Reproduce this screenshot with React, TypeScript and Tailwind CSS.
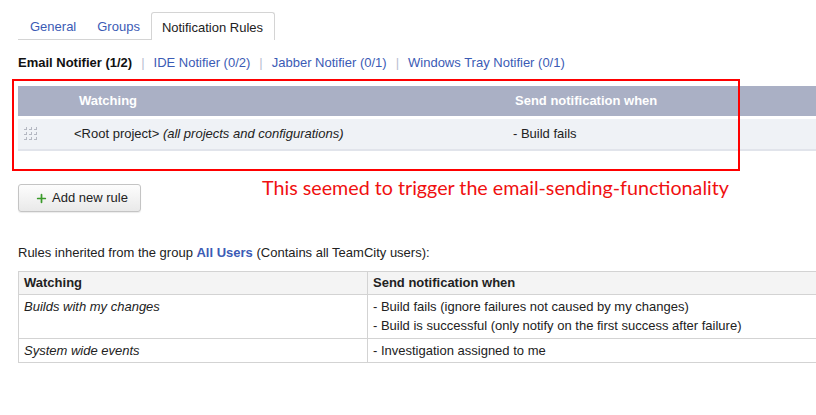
import { Plus } from "lucide-react";

const notifiers = [
  { label: "IDE Notifier (0/2)" },
  { label: "Jabber Notifier (0/1)" },
  { label: "Windows Tray Notifier (0/1)" },
];

const DragHandle = () => (
  <svg width="16" height="15" viewBox="0 0 16 15" className="text-[#b4b8c2]">
    {[0, 5, 10].map((y) =>
      [0, 5, 10].map((x) => (
        <g key={`${x}-${y}`} fill="currentColor">
          <rect x={x + 1} y={y + 2} width="3" height="1" />
          <rect x={x + 3} y={y} width="1" height="3" />
        </g>
      ))
    )}
  </svg>
);

const App = () => {
  return (
    <div className="relative w-[816px] h-[415px] overflow-hidden bg-white text-[13px] text-[#222] font-['Liberation_Sans',Arial,sans-serif]">
      <div className="pl-[18px]">
        {/* Tabs */}
        <div className="pt-[12px]">
          <div className="flex items-stretch w-[256px] border-b border-[#d4d4d4] h-[28px]">
            <span className="flex items-center pl-[12px] pr-[10px] pt-[3px] text-[#3b5bb5]">General</span>
            <span className="flex items-center pl-[11px] pr-[11px] pt-[3px] text-[#3b5bb5]">Groups</span>
            <span className="-mb-px flex items-center pl-[10px] pr-[11px] pt-[3px] border border-b-0 border-[#d4d4d4] rounded-t-[3px] bg-white text-[#222] whitespace-nowrap">
              Notification Rules
            </span>
          </div>
        </div>

        {/* Notifier switch */}
        <div className="mt-[15px] flex items-center leading-[16px] whitespace-nowrap">
          <span className="font-bold text-[#111]">Email Notifier (1/2)</span>
          {notifiers.map((n) => (
            <span key={n.label} className="flex items-center">
              <span className="mx-[9px] text-[#b9bed0]">|</span>
              <span className="text-[#3b5bb5]">{n.label}</span>
            </span>
          ))}
        </div>

        {/* Own rules */}
        <div className="mt-[15px] w-[810px]">
          <div className="flex h-[30px] items-center bg-[#aab0c5] text-white font-bold">
            <span className="w-[56px]" />
            <span className="w-[441px] pl-[5px]">Watching</span>
            <span>Send notification when</span>
          </div>
          <div className="mt-[3px] flex h-[32px] items-center bg-[#eff2f6] border-b-2 border-[#e1e4eb]">
            <span className="w-[56px] pl-[5px] flex items-center">
              <DragHandle />
            </span>
            <span className="w-[439px]">
              &lt;Root project&gt; <i>(all projects and configurations)</i>
            </span>
            <span>- Build fails</span>
          </div>
        </div>

        {/* Add button */}
        <button className="mt-[33px] flex h-[28px] w-[123px] items-center gap-[4px] rounded-[3px] border border-[#c4c4c4] bg-gradient-to-b from-[#fdfdfd] to-[#e9e9e9] pl-[16px] text-[#222] shadow-[0_1px_1px_rgba(0,0,0,0.08)]">
          <Plus className="h-[13px] w-[13px] text-[#3a9a2a]" strokeWidth={3.2} />
          <span>Add new rule</span>
        </button>

        {/* Inherited rules */}
        <p className="mt-[33px] leading-[16px]">
          Rules inherited from the group <span className="font-bold text-[#3b5bb5]">All Users</span> (Contains all TeamCity users):
        </p>

        <div className="mt-[10px] w-[810px] border border-[#d3d3d3]">
          <div className="flex h-[23px] items-center bg-[#f4f4f4] border-b border-[#d3d3d3] font-bold">
            <span className="w-[349px] h-full flex items-center pl-[5px] border-r border-[#d3d3d3]">Watching</span>
            <span className="pl-[5px]">Send notification when</span>
          </div>
          <div className="flex border-b border-[#d3d3d3] leading-[19px]">
            <span className="w-[349px] pl-[5px] pt-[2px] border-r border-[#d3d3d3] italic">Builds with my changes</span>
            <div className="pl-[5px] pt-[2px] pb-[3px]">
              <div>- Build fails (ignore failures not caused by my changes)</div>
              <div>- Build is successful (only notify on the first success after failure)</div>
            </div>
          </div>
          <div className="flex h-[23px] items-center">
            <span className="w-[349px] h-full flex items-center pl-[5px] border-r border-[#d3d3d3] italic">System wide events</span>
            <span className="pl-[5px]">- Investigation assigned to me</span>
          </div>
        </div>
      </div>

      {/* Annotation overlay */}
      <div className="absolute left-[12px] top-[79px] h-[92px] w-[728px] border-2 border-[#ff0000]" />
      <div className="absolute left-[262px] top-[175px] text-[19.7px] leading-[26px] text-[#f01010] font-['Lato',sans-serif] whitespace-nowrap">
        This seemed to trigger the email-sending-functionality
      </div>
    </div>
  );
};

export default App;
